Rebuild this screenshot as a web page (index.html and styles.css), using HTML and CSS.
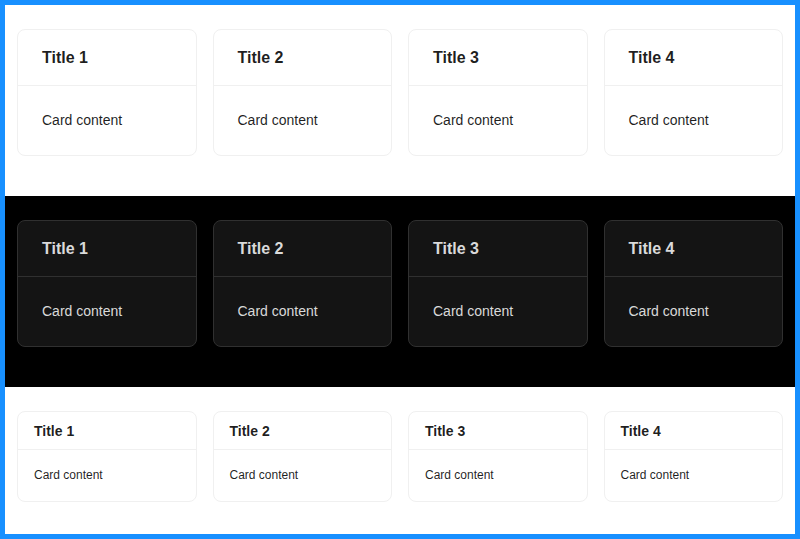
FILE: index.html
```html
<!DOCTYPE html>
<html>
<head>
<meta charset="utf-8">
<link rel="stylesheet" href="styles.css">
</head>
<body>
<div class="frame">
  <section class="band light">
    <div class="card"><div class="card-head">Title 1</div><div class="card-body">Card content</div></div>
    <div class="card"><div class="card-head">Title 2</div><div class="card-body">Card content</div></div>
    <div class="card"><div class="card-head">Title 3</div><div class="card-body">Card content</div></div>
    <div class="card"><div class="card-head">Title 4</div><div class="card-body">Card content</div></div>
  </section>
  <section class="band dark">
    <div class="card"><div class="card-head">Title 1</div><div class="card-body">Card content</div></div>
    <div class="card"><div class="card-head">Title 2</div><div class="card-body">Card content</div></div>
    <div class="card"><div class="card-head">Title 3</div><div class="card-body">Card content</div></div>
    <div class="card"><div class="card-head">Title 4</div><div class="card-body">Card content</div></div>
  </section>
  <section class="band light small">
    <div class="card"><div class="card-head">Title 1</div><div class="card-body">Card content</div></div>
    <div class="card"><div class="card-head">Title 2</div><div class="card-body">Card content</div></div>
    <div class="card"><div class="card-head">Title 3</div><div class="card-body">Card content</div></div>
    <div class="card"><div class="card-head">Title 4</div><div class="card-body">Card content</div></div>
  </section>
</div>
</body>
</html>
```
FILE: styles.css
```css
* { box-sizing: border-box; }
html, body { margin: 0; padding: 0; }
body {
  font-family: "Liberation Sans", Arial, sans-serif;
  width: 800px;
  height: 539px;
  overflow: hidden;
}
.frame {
  width: 800px;
  height: 539px;
  border: 5px solid #1890ff;
  background: #fff;
  display: flex;
  flex-direction: column;
}
.band {
  display: grid;
  grid-template-columns: repeat(4, 1fr);
  column-gap: 16px;
  align-items: start;
  padding: 24px 12px 0;
  height: 191px;
}
.band.small { height: 147px; }
.light { background: #fff; }
.dark { background: #000; }
.card {
  border: 1px solid #f0f0f0;
  border-radius: 8px;
  background: #fff;
  color: rgba(0,0,0,0.88);
}
.card-head {
  height: 56px;
  padding: 0 24px;
  display: flex;
  align-items: center;
  font-size: 16px;
  font-weight: 700;
  border-bottom: 1px solid #f0f0f0;
}
.card-body {
  padding: 24px;
  font-size: 14px;
  line-height: 21px;
}
.dark .card {
  background: #141414;
  border-color: #303030;
  color: rgba(255,255,255,0.85);
}
.dark .card-head { border-bottom-color: #303030; }
.small .card-head {
  height: 38px;
  padding: 0 16px;
  font-size: 14px;
}
.small .card-body {
  padding: 16px;
  font-size: 12px;
  line-height: 19px;
}
```
